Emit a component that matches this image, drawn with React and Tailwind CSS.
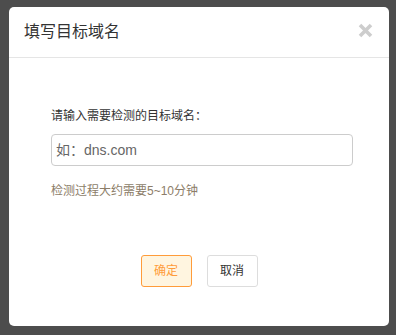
export default function App() {
  return (
    <div className="w-[396px] h-[335px] bg-[#4d4d4d] pl-[9px] pt-[7px] overflow-hidden" style={{ fontFamily: '"Liberation Sans", "Noto Sans CJK SC", sans-serif' }}>
      <div className="w-[380px] h-[319px] bg-white rounded-[5px] flex flex-col">
        <div className="h-[51px] px-[15px] flex items-center justify-between border-b border-[#e5e5e5]">
          <h3 className="text-[16px] text-[#333] leading-none">填写目标域名</h3>
          <button className="w-[15px] h-[15px] mr-[1px] mb-[3px] flex items-center justify-center">
            <svg width="15" height="15" viewBox="0 0 15 15">
              <path d="M2 2 L13 13 M13 2 L2 13" stroke="#cdcdcd" strokeWidth="3.6" strokeLinecap="butt" />
            </svg>
          </button>
        </div>
        <div className="pt-[48px] px-[42px]">
          <p className="text-[12px] leading-[20px] text-[#333]">请输入需要检测的目标域名：</p>
          <input
            className="mt-2 w-[302px] h-[32px] border border-[#cccccc] rounded-[4px] px-[4px] text-[14px] text-[#555] placeholder:text-[#666] outline-none"
            placeholder="如：dns.com"
          />
          <p className="mt-[15px] text-[12px] leading-[20px] text-[#8c7d69]">检测过程大约需要5~10分钟</p>
        </div>
        <div className="mt-[54px] flex justify-center gap-[15px]">
          <button className="w-[51px] h-[32px] rounded-[3px] border border-[#ff9c3a] bg-[#fff5e0] text-[12px] text-[#ff9c3a]">确定</button>
          <button className="w-[51px] h-[32px] rounded-[3px] border border-[#dddddd] bg-white text-[12px] text-[#333]">取消</button>
        </div>
      </div>
    </div>
  );
}
